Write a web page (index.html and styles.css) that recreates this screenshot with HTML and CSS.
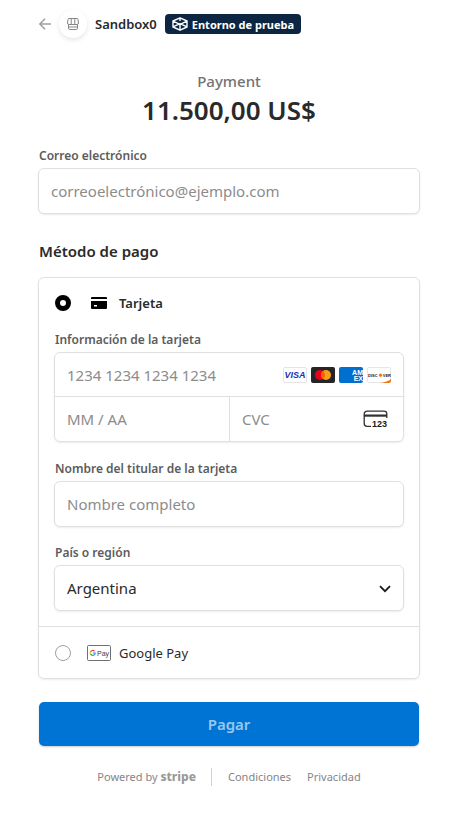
FILE: index.html
```html
<!DOCTYPE html>
<html lang="es">
<head>
<meta charset="utf-8">
<meta name="viewport" content="width=device-width, initial-scale=1">
<title>Sandbox0</title>
<link rel="stylesheet" href="styles.css">
</head>
<body>
<div class="page">
  <header class="header">
    <a class="back" href="#" aria-label="Volver">
      <svg width="12" height="12" viewBox="0 0 12 12" fill="none" stroke="#a0a0a0" stroke-width="1.500"><path d="M12 6H1M6 .8 .9 6 6 11.2"/></svg>
    </a>
    <span class="shop">
      <svg width="12" height="12" viewBox="0 0 12 12" fill="none" stroke="#858585" stroke-width="1"><path d="M2 .5h8a1 1 0 0 1 1 1L11.500 5A1.500 1.500 0 0 1 10 6.500H2A1.500 1.500 0 0 1 .5 5L1 1.500a1 1 0 0 1 1-1zM4.200.5V6M7.800.5V6M1.500 6.500v3.800c0 .8.400 1.200 1.200 1.200h6.600c.8 0 1.200-.4 1.200-1.200V6.500M1.500 9h9"/></svg>
    </span>
    <span class="merchant">Sandbox0</span>
    <span class="badge">
      <svg width="16" height="14" viewBox="0 0 16 14" fill="none" stroke="#fff" stroke-width="1.400" stroke-linejoin="round"><path d="M8 .9 15 4v6l-7 3.200L1 10V4zM1 4.200l7 3.200 7-3.200M1 9.800l7-3.200 7 3.200M8 1v3M8 7.400V13"/></svg>
      Entorno de prueba
    </span>
  </header>

  <main>
    <section class="summary">
      <p class="product">Payment</p>
      <p class="amount">11.500,00 US$</p>
    </section>

    <form>
      <label class="label" for="email">Correo electrónico</label>
      <input class="field" id="email" type="email" placeholder="correoelectrónico@ejemplo.com">

      <h2 class="title">Método de pago</h2>
      <div class="methods">
        <label class="method">
          <input class="radio" type="radio" name="method" checked>
          <svg class="method-icon" width="24" height="16" viewBox="0 0 24 16"><path d="M5 2h14a1 1 0 0 1 1 1v1H4V3a1 1 0 0 1 1-1zM4 6h16v7a1 1 0 0 1-1 1H5a1 1 0 0 1-1-1z"/><path fill="#fff" d="M7 10h3v1.500H7z"/></svg>
          <span class="method-name selected">Tarjeta</span>
        </label>

        <div class="details">
          <label class="label" for="number">Información de la tarjeta</label>
          <div class="group">
            <div class="cell wide">
              <input class="bare" id="number" inputmode="numeric" placeholder="1234 1234 1234 1234">
              <span class="brands">
                <svg width="24" height="16" viewBox="0 0 24 16"><rect x=".5" y=".5" width="23" height="15" rx="1.500" fill="#fff" stroke="#e3e3e6"/><text class="brand-text visa" x="12" y="11" text-anchor="middle">VISA</text></svg>
                <svg width="24" height="16" viewBox="0 0 24 16"><rect width="24" height="16" rx="2" fill="#252525"/><circle cx="9" cy="8" r="5" fill="#eb001b"/><circle cx="15" cy="8" r="5" fill="#f79e1b"/><path fill="#ff5f00" d="M12 4a5 5 0 0 1 0 8 5 5 0 0 1 0-8z"/></svg>
                <svg width="24" height="16" viewBox="0 0 24 16"><rect width="24" height="16" rx="2" fill="#016fd0"/><text class="brand-text amex" x="24" y="8" text-anchor="end">AM</text><text class="brand-text amex" x="24" y="14" text-anchor="end">EX</text></svg>
                <svg width="24" height="16" viewBox="0 0 24 16"><rect x=".5" y=".5" width="23" height="15" rx="1.500" fill="#fff" stroke="#e6e6e6"/><path fill="#f27712" d="M13 16c5-.6 8.500-2 11-4v2a2 2 0 0 1-2 2z"/><text class="brand-text discover" x="1" y="10">DISC</text><circle cx="13.500" cy="8.200" r="1.600" fill="#f27712"/><text class="brand-text discover" x="24" y="10" text-anchor="end">VER</text></svg>
              </span>
            </div>
            <div class="cell">
              <input class="bare" aria-label="Vencimiento" inputmode="numeric" placeholder="MM / AA">
            </div>
            <div class="cell cvc">
              <input class="bare" aria-label="CVC" inputmode="numeric" placeholder="CVC">
              <svg class="cvc-icon" width="25" height="18" viewBox="0 0 25 18"><path fill="none" stroke="#303030" stroke-width="1.300" d="M8 16.300H4A2.800 2.800 0 0 1 1.200 13.500V4A2.800 2.800 0 0 1 4 1.200h17A2.800 2.800 0 0 1 23.800 4v4"/><path fill="#303030" d="M1 4.500h23v2.200H1z"/><text class="brand-text code" x="9" y="17">123</text></svg>
            </div>
          </div>

          <label class="label" for="holder">Nombre del titular de la tarjeta</label>
          <input class="field" id="holder" type="text" placeholder="Nombre completo">

          <label class="label" for="country">País o región</label>
          <div class="select">
            <select class="field" id="country"><option>Argentina</option></select>
            <svg class="chevron" width="12" height="8" viewBox="0 0 12 8" fill="none" stroke="#1a1a1a" stroke-width="1.800"><path d="m1 1.200 5 5 5-5"/></svg>
          </div>
        </div>

        <label class="method other">
          <input class="radio" type="radio" name="method">
          <svg class="method-icon" width="24" height="16" viewBox="0 0 24 16"><rect x=".5" y=".5" width="23" height="15" rx="1" fill="#fff" stroke="#6d7075"/><g fill="none" stroke-width="1.200"><path stroke="#ea4335" d="M3.500 7A2.400 2.400 0 0 1 7.500 6.200"/><path stroke="#fbbc04" d="M3.500 6.900A2.400 2.400 0 0 0 3.600 9.200"/><path stroke="#34a853" d="M3.600 9.100A2.400 2.400 0 0 0 7.200 9.900"/><path stroke="#4285f4" d="M5.800 8h2.400A2.400 2.400 0 0 1 7.200 9.900"/></g><text class="brand-text gpay" x="10" y="10.500">Pay</text></svg>
          <span class="method-name">Google Pay</span>
        </label>
      </div>

      <button class="pay" type="submit">Pagar</button>
    </form>
  </main>

  <footer class="footer">
    <a class="powered" href="#">Powered by <b class="stripe">stripe</b></a>
    <a href="#">Condiciones</a>
    <a href="#">Privacidad</a>
  </footer>
</div>
</body>
</html>
```

FILE: styles.css
```css
* { box-sizing: border-box; }

body {
  margin: 0;
  background: #fff;
  color: #2a2a2a;
  font-family: "Noto Sans", "Open Sans", sans-serif;
  font-size: 15px;
}

input, select, button { font: inherit; color: inherit; }

a { color: inherit; text-decoration: none; }

p, h2 { margin: 0; }

svg { display: block; flex: none; }

.page { padding: 10px 49px 40px 38px; }

.header { display: flex; align-items: center; height: 28px; }

.back { margin-left: 1px; }

.shop {
  display: grid;
  place-items: center;
  width: 28px;
  height: 28px;
  margin: 0 8px;
  border-radius: 50%;
  box-shadow: 0 2px 5px rgba(0, 0, 0, .1);
}

.merchant { font-size: 13px; font-weight: 600; }

.badge {
  display: flex;
  align-items: center;
  gap: 4px;
  height: 20px;
  margin-left: 8px;
  padding: 0 7px;
  border-radius: 4px;
  background: #0b2542;
  color: #fff;
  font-size: 11px;
  font-weight: 700;
}

.summary { margin-top: 32px; text-align: center; }

.product {
  color: #727272;
  font-size: 15px;
  font-weight: 500;
  line-height: 22px;
}

.amount { font-size: 26px; font-weight: 600; line-height: 36px; }

.label {
  display: block;
  margin-bottom: 2px;
  padding-left: 1px;
  color: #5c5c5c;
  font-size: 12px;
  font-weight: 600;
  line-height: 20px;
}

form > .label { margin-top: 18px; }

.field {
  display: block;
  width: 100%;
  height: 46px;
  padding: 0 12px;
  border: 1px solid #e0e0e0;
  border-radius: 6px;
  background: #fff;
  box-shadow: 0 1px 2px rgba(0, 0, 0, .08);
}

::placeholder { color: #8c8c8c; opacity: 1; }

.title {
  margin: 25px 0 14px;
  padding-left: 1px;
  font-size: 15px;
  font-weight: 600;
  line-height: 24px;
}

.methods {
  border: 1px solid #e0e0e0;
  border-radius: 6px;
  box-shadow: 0 1px 2px rgba(0, 0, 0, .08);
}

.method { display: flex; align-items: center; height: 50px; padding: 0 16px; }

.other { height: 52px; border-top: 1px solid #e0e0e0; }

.radio {
  appearance: none;
  width: 16px;
  height: 16px;
  margin: 0;
  border: 1px solid #a0a0a0;
  border-radius: 50%;
}

.radio:checked { border: 5px solid #000; }

.method-icon { margin: 0 8px 0 16px; }

.method-name { font-size: 13px; }

.selected { font-weight: 600; }

.details { padding: 2px 15px 15px; }

.group {
  display: grid;
  grid-template-columns: 1fr 1fr;
  margin-bottom: 17px;
  border: 1px solid #e0e0e0;
  border-radius: 6px;
  box-shadow: 0 1px 2px rgba(0, 0, 0, .08);
}

.cell { display: flex; align-items: center; height: 44px; padding: 0 12px; }

.wide { grid-column: 1 / 3; border-bottom: 1px solid #e0e0e0; }

.cvc { border-left: 1px solid #e0e0e0; padding-right: 15px; }

.bare {
  flex: 1;
  width: 0;
  min-width: 0;
  padding: 0;
  border: 0;
  background: none;
  outline: 0;
}

.brands { display: flex; gap: 4px; }

.brand-text { font-family: "Liberation Sans", sans-serif; font-weight: 700; }

.visa { fill: #1a2fb8; font-size: 9px; font-style: italic; }

.amex { fill: #fff; font-size: 7px; }

.discover { fill: #222; font-size: 4px; }

.code { fill: #1a1a1a; font-size: 9px; }

.gpay { fill: #3c4043; font-size: 7px; font-weight: 400; }

.details > .field { margin-bottom: 16px; }

.select { position: relative; }

.select .field { appearance: none; }

.chevron { position: absolute; top: 20px; right: 13px; pointer-events: none; }

.pay {
  display: block;
  width: calc(100% - 2px);
  height: 44px;
  margin: 23px 1px 0;
  border: 0;
  border-radius: 5px;
  background: #0074d4;
  box-shadow: 0 1px 2px rgba(0, 0, 0, .2);
  color: #99c7ee;
  font-size: 15px;
  font-weight: 600;
}

.footer {
  display: flex;
  align-items: center;
  justify-content: center;
  gap: 16px;
  margin-top: 22px;
  color: #858585;
  font-size: 11px;
  line-height: 18px;
}

.powered { padding-right: 15px; border-right: 1px solid #d0d0d0; }

.stripe { font-size: 12px; font-weight: 800; color: #9a9a9a; }
```
